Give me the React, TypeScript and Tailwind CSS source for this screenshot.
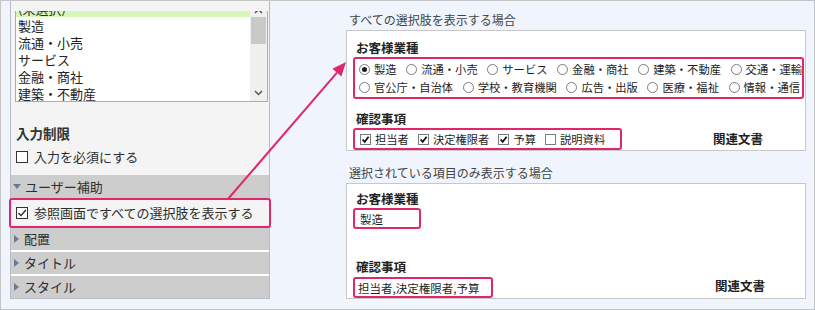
import React from "react";

const PINK = "#e2266c";

function Radio({ checked }: { checked?: boolean }) {
  return (
    <span className="inline-flex h-[11px] w-[11px] shrink-0 items-center justify-center rounded-full border border-[#7c7c7c] bg-white">
      {checked && <span className="h-[5px] w-[5px] rounded-full bg-[#1e1e1e]" />}
    </span>
  );
}

function SmallCheck({ checked }: { checked?: boolean }) {
  return (
    <span className="inline-flex h-[11px] w-[11px] shrink-0 items-center justify-center border border-[#7c7c7c] bg-white">
      {checked && (
        <svg width="9" height="9" viewBox="0 0 9 9">
          <path d="M1.5 4.5 L3.7 6.8 L7.6 1.8" fill="none" stroke="#111" strokeWidth="1.8" />
        </svg>
      )}
    </span>
  );
}

function BigCheck({ checked }: { checked?: boolean }) {
  return (
    <span className="inline-flex h-[12px] w-[12px] shrink-0 items-center justify-center border border-[#333] bg-white">
      {checked && (
        <svg width="10" height="10" viewBox="0 0 10 10">
          <path d="M1.5 5 L4 7.6 L8.8 2" fill="none" stroke="#222" strokeWidth="1.3" />
        </svg>
      )}
    </span>
  );
}

function TriRight() {
  return (
    <svg width="5" height="8" viewBox="0 0 5 8" className="shrink-0">
      <path d="M0 0 L5 4 L0 8 Z" fill="#6a7b98" />
    </svg>
  );
}

function TriDown() {
  return (
    <svg width="8" height="5" viewBox="0 0 8 5" className="shrink-0">
      <path d="M0 0 L8 0 L4 5 Z" fill="#6a7b98" />
    </svg>
  );
}

const row1 = ["製造", "流通・小売", "サービス", "金融・商社", "建築・不動産", "交通・運輸"];
const row2 = ["官公庁・自治体", "学校・教育機関", "広告・出版", "医療・福祉", "情報・通信"];

function RadioRow({ items, first }: { items: string[]; first?: boolean }) {
  return (
    <div className="flex h-[18px] items-center whitespace-nowrap">
      {items.map((t, i) => (
        <span key={t} className="mr-[9.6px] flex shrink-0 items-center">
          <Radio checked={first && i === 0} />
          <span className="ml-[4px] text-[11.3px] leading-[18px] text-[#1e1e1e]">{t}</span>
        </span>
      ))}
    </div>
  );
}

export default function App() {
  const checks: [string, boolean][] = [
    ["担当者", true],
    ["決定権限者", true],
    ["予算", true],
    ["説明資料", false],
  ];
  return (
    <div className="relative flex h-[310px] w-[815px] overflow-hidden border border-[#c4c4c4] bg-[#f0f4fc] font-['Noto_Sans_CJK_JP','Noto_Sans',sans-serif] text-[#2e2e2e]">
      {/* Left panel */}
      <div className="ml-[9px] flex h-[298px] w-[260px] shrink-0 flex-col border-x border-b border-[#b8bcc4] bg-[#f4f4f4]">
        {/* listbox */}
        <div className="ml-[4px] mt-[10px] flex h-[91px] w-[253px] overflow-hidden border-x border-b border-[#a6aebd] bg-white">
          <div className="mt-[-11px] flex-1">
            <div className="h-[17px] bg-[#d6f7b8] pl-[2px] text-[13px] leading-[17px]">(未選択)</div>
            {["製造", "流通・小売", "サービス", "金融・商社", "建築・不動産"].map((t) => (
              <div key={t} className="h-[17px] pl-[2px] text-[13px] leading-[17px] text-[#222]">
                {t}
              </div>
            ))}
          </div>
          <div className="relative w-[17px] shrink-0 bg-[#f0f0f0]">
            <svg width="9" height="6" viewBox="0 0 9 6" className="absolute left-[4px] top-[-3px]">
              <path d="M1 5 L4.5 1.5 L8 5" fill="none" stroke="#555" strokeWidth="1.5" />
            </svg>
            <div className="absolute left-[1px] top-[6px] h-[27px] w-[15px] bg-[#c9c9c9]" />
            <svg width="9" height="6" viewBox="0 0 9 6" className="absolute bottom-[5px] left-[4px]">
              <path d="M1 1 L4.5 4.5 L8 1" fill="none" stroke="#555" strokeWidth="1.5" />
            </svg>
          </div>
        </div>

        <div className="ml-[5px] mt-[22px] h-[18px] text-[13.5px] font-bold leading-[18px] text-[#333]">入力制限</div>

        <div className="ml-[5px] mt-[6px] flex h-[18px] items-center">
          <BigCheck />
          <span className="ml-[6px] text-[13px] leading-[18px]">入力を必須にする</span>
        </div>

        <div className="mt-[9px] flex h-[23px] items-center bg-[#cdcdcd] pl-[2px]">
          <TriDown />
          <span className="ml-[4px] text-[13px] leading-[18px]">ユーザー補助</span>
        </div>

        <div
          className="mx-[-2px] flex h-[30px] items-center rounded-[3px] border-2 bg-[#f4f4f4] pl-[5px]"
          style={{ borderColor: PINK }}
        >
          <BigCheck checked />
          <span className="ml-[6px] text-[13px] leading-[18px]">参照画面ですべての選択肢を表示する</span>
        </div>

        <div className="flex h-[22px] items-center bg-[#cdcdcd] pl-[3px]">
          <TriRight />
          <span className="ml-[5px] text-[13px] leading-[18px]">配置</span>
        </div>
        <div className="h-[2px] bg-white" />
        <div className="flex h-[22px] items-center bg-[#cdcdcd] pl-[3px]">
          <TriRight />
          <span className="ml-[5px] text-[13px] leading-[18px]">タイトル</span>
        </div>
        <div className="h-[2px] bg-white" />
        <div className="flex flex-1 items-center bg-[#cdcdcd] pl-[3px]">
          <TriRight />
          <span className="ml-[5px] text-[13px] leading-[18px]">スタイル</span>
        </div>
      </div>

      {/* Right side */}
      <div className="ml-[76px] flex w-[460px] shrink-0 flex-col pt-[11px]">
        <div className="h-[16px] pl-[3px] text-[12px] leading-[16px] text-[#444]">すべての選択肢を表示する場合</div>
        <div className="mt-[2px] flex h-[121px] flex-col border border-[#c8c8c8] bg-white">
          <div className="ml-[9px] mt-[9px] h-[16px] text-[12.5px] font-bold leading-[16px] text-[#222]">お客様業種</div>
          <div
            className="ml-[6px] mt-[1px] h-[42px] w-[451px] overflow-hidden rounded-[3px] border-2 pl-[4px] pt-[1px]"
            style={{ borderColor: PINK }}
          >
            <RadioRow items={row1} first />
            <RadioRow items={row2} />
          </div>
          <div className="ml-[9px] mt-[12px] h-[16px] text-[12.5px] font-bold leading-[16px] text-[#222]">確認事項</div>
          <div className="mt-[1px] flex items-center">
            <div
              className="ml-[6px] flex h-[22px] w-[269px] items-center rounded-[3px] border-2 pl-[5px]"
              style={{ borderColor: PINK }}
            >
              {checks.map(([t, c]) => (
                <span key={t} className="mr-[9px] flex items-center">
                  <SmallCheck checked={c} />
                  <span className="ml-[4px] text-[11.3px] leading-[16px] text-[#1e1e1e]">{t}</span>
                </span>
              ))}
            </div>
            <span className="ml-[91px] text-[12.5px] font-bold leading-[16px] text-[#222]">関連文書</span>
          </div>
        </div>

        <div className="mt-[14px] h-[16px] pl-[3px] text-[12px] leading-[16px] text-[#444]">選択されている項目のみ表示する場合</div>
        <div className="mt-[2px] flex h-[116px] flex-col border border-[#c8c8c8] bg-white">
          <div className="ml-[9px] mt-[7px] h-[16px] text-[12.5px] font-bold leading-[16px] text-[#222]">お客様業種</div>
          <div
            className="ml-[6px] mt-[1px] flex h-[22px] w-[68px] items-center rounded-[3px] border-2 pl-[5px]"
            style={{ borderColor: PINK }}
          >
            <span className="text-[11.5px] leading-[16px] text-[#1e1e1e]">製造</span>
          </div>
          <div className="ml-[9px] mt-[30px] h-[16px] text-[12.5px] font-bold leading-[16px] text-[#222]">確認事項</div>
          <div className="mt-[2px] flex items-center">
            <div
              className="ml-[6px] flex h-[21px] w-[140px] items-center rounded-[3px] border-2 pl-[3px]"
              style={{ borderColor: PINK }}
            >
              <span className="whitespace-nowrap text-[11.5px] leading-[16px] text-[#1e1e1e]">担当者,決定権限者,予算</span>
            </div>
            <span className="ml-[222px] mt-[-3px] text-[12.5px] font-bold leading-[16px] text-[#222]">関連文書</span>
          </div>
        </div>
      </div>

      {/* Arrow overlay */}
      <svg className="pointer-events-none absolute left-0 top-0" width="815" height="310" viewBox="0 0 815 310">
        <line x1="227" y1="198" x2="336" y2="71.6" stroke={PINK} strokeWidth="2" />
        <path d="M345 61 L340.4 75.5 L331.4 67.7 Z" fill={PINK} />
      </svg>
    </div>
  );
}
